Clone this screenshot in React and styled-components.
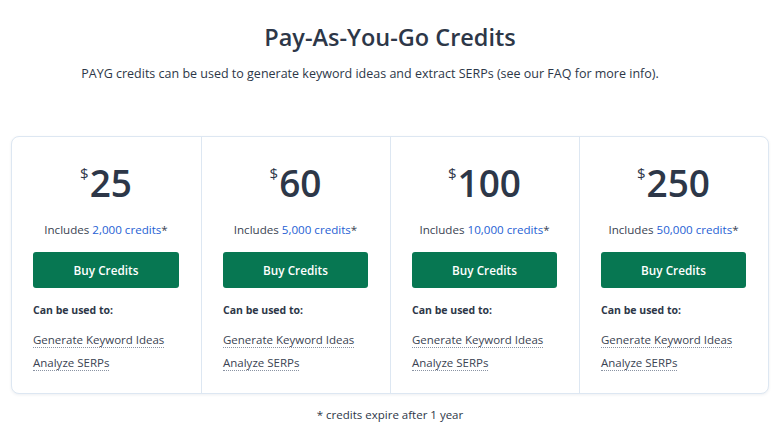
import React from 'react'
import styled, {createGlobalStyle} from 'styled-components'

const GlobalStyle = createGlobalStyle`
    body {
        margin: 0;
        background: #ffffff;
        font-family: "Open Sans", "Noto Sans", sans-serif;
        color: #2d3748;
    }
`

const plans = [
    {price: 25, credits: '2,000'},
    {price: 60, credits: '5,000'},
    {price: 100, credits: '10,000'},
    {price: 250, credits: '50,000'},
]

export default function App() {
    return (
        <>
            <GlobalStyle />
            <Page>
                <Title>Pay-As-You-Go Credits</Title>
                <Subtitle>PAYG credits can be used to generate keyword ideas and extract SERPs (see our FAQ for more info).</Subtitle>
                <Cards>
                    {plans.map(plan => (
                        <Card key={plan.price}>
                            <Price>
                                <Dollar>$</Dollar>
                                {plan.price}
                            </Price>
                            <Includes>
                                Includes <Blue>{plan.credits} credits</Blue>*
                            </Includes>
                            <BuyButton>Buy Credits</BuyButton>
                            <UsedLabel>Can be used to:</UsedLabel>
                            <UseList>
                                <UseItem><Dotted>Generate Keyword Ideas</Dotted></UseItem>
                                <UseItem><Dotted>Analyze SERPs</Dotted></UseItem>
                            </UseList>
                        </Card>
                    ))}
                </Cards>
                <Footnote>* credits expire after 1 year</Footnote>
            </Page>
        </>
    )
}

const Page = styled.div`
    width: 780px;
    height: 430px;
    box-sizing: border-box;
    padding: 19px 12px 0 12px;
    display: flex;
    flex-direction: column;
    align-items: center;
    overflow: hidden;
`

const Title = styled.h1`
    margin: 0;
    font-size: 23.5px;
    font-weight: 600;
    line-height: 36px;
    color: #2d3748;
`

const Subtitle = styled.p`
    margin: 10px 40px 0 0;
    font-size: 12.5px;
    line-height: 18px;
    color: #2d3748;
`

const Cards = styled.div`
    margin-top: 53px;
    width: 100%;
    display: grid;
    grid-template-columns: repeat(4, 1fr);
    border: 1px solid #dde7f2;
    border-radius: 8px;
    box-shadow: 0 1px 3px rgba(30, 50, 90, 0.08);
    background: #fff;
`

const Card = styled.div`
    padding: 14px 22px 21px 21px;
    display: flex;
    flex-direction: column;
    align-items: stretch;
    border-left: 1px solid #dde7f2;
    &:first-child {
        border-left: none;
    }
`

const Price = styled.div`
    text-align: center;
    font-size: 37px;
    font-weight: 600;
    line-height: 44px;
    color: #2d3748;
`

const Dollar = styled.span`
    font-size: 15px;
    font-weight: 400;
    vertical-align: 18px;
    margin-right: 1px;
`

const Includes = styled.div`
    margin-top: 16px;
    text-align: center;
    font-size: 11.6px;
    line-height: 18px;
    color: #3a4352;
`

const Blue = styled.span`
    color: #1f5fd4;
`

const BuyButton = styled.button`
    margin-top: 13px;
    height: 36px;
    border: none;
    border-radius: 3px;
    background: #077752;
    color: #fff;
    font-family: inherit;
    font-size: 11.75px;
    font-weight: 600;
    cursor: pointer;
`

const UsedLabel = styled.div`
    margin-top: 14px;
    font-size: 10.5px;
    font-weight: 700;
    line-height: 16px;
    color: #2d3748;
`

const UseList = styled.div`
    margin-top: 13px;
    display: flex;
    flex-direction: column;
    gap: 5px;
`

const UseItem = styled.div`
    font-size: 11.5px;
    line-height: 18px;
    color: #3a4352;
`

const Dotted = styled.span`
    border-bottom: 1px dotted #8a93a3;
`

const Footnote = styled.div`
    margin-top: 12px;
    font-size: 11.5px;
    line-height: 18px;
    color: #2d3748;
`
